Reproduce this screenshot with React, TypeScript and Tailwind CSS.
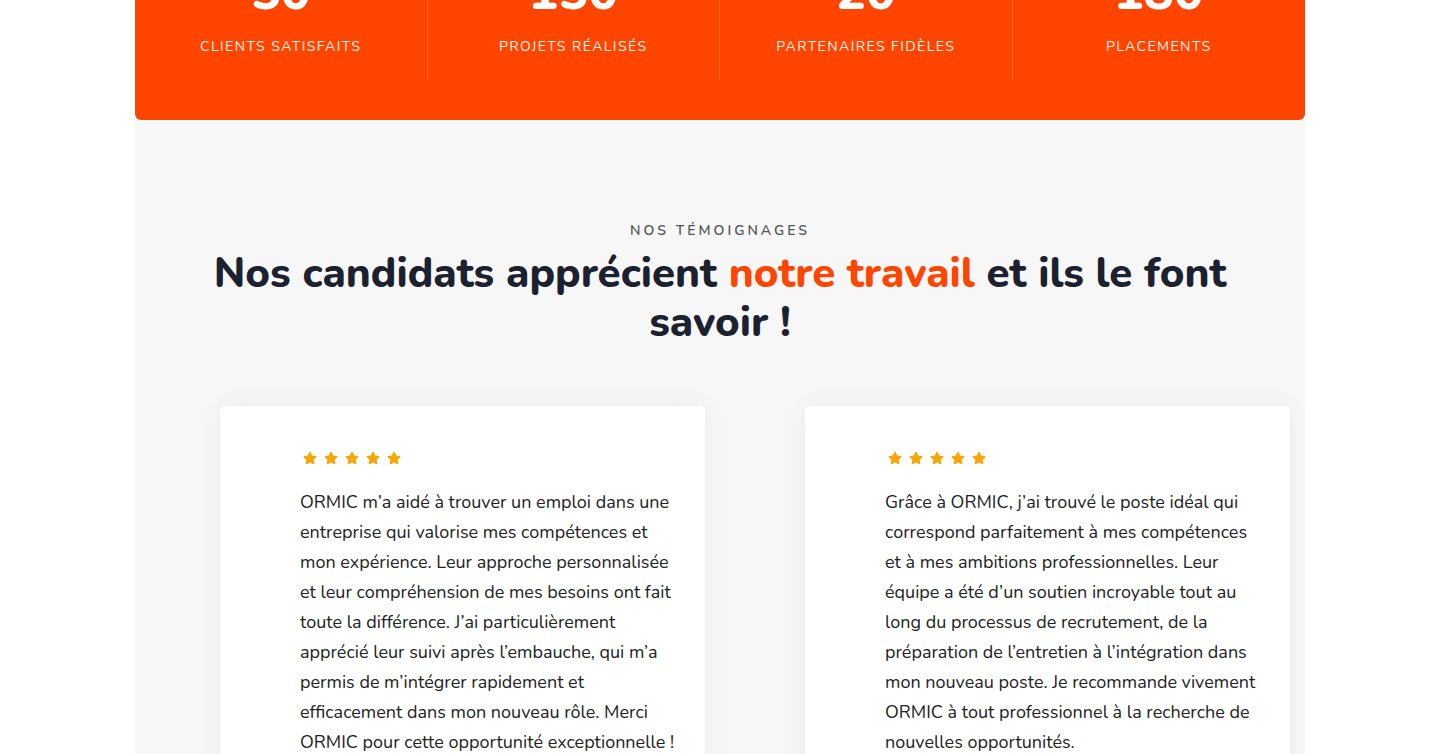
import { FaStar } from 'react-icons/fa';

const stats = [
  { value: '50', label: 'Clients satisfaits' },
  { value: '150', label: 'Projets réalisés' },
  { value: '20', label: 'Partenaires fidèles' },
  { value: '180', label: 'Placements' },
];

const testimonials = [
  [
    'ORMIC m’a aidé à trouver un emploi dans une',
    'entreprise qui valorise mes compétences et',
    'mon expérience. Leur approche personnalisée',
    'et leur compréhension de mes besoins ont fait',
    'toute la différence. J’ai particulièrement',
    'apprécié leur suivi après l’embauche, qui m’a',
    'permis de m’intégrer rapidement et',
    'efficacement dans mon nouveau rôle. Merci',
    'ORMIC pour cette opportunité exceptionnelle !',
  ],
  [
    'Grâce à ORMIC, j’ai trouvé le poste idéal qui',
    'correspond parfaitement à mes compétences',
    'et à mes ambitions professionnelles. Leur',
    'équipe a été d’un soutien incroyable tout au',
    'long du processus de recrutement, de la',
    'préparation de l’entretien à l’intégration dans',
    'mon nouveau poste. Je recommande vivement',
    'ORMIC à tout professionnel à la recherche de',
    'nouvelles opportunités.',
  ],
];

function TestimonialCard({ lines }: { lines: string[] }) {
  return (
    <div className="w-[485px] shrink-0 rounded bg-white pt-[45px] pb-10 pl-20 pr-5 shadow-[0_0_24px_rgba(0,0,0,0.05)]">
      <div className="ml-[3px] flex gap-[7px] text-[#f7a707]">
        {[0, 1, 2, 3, 4].map((i) => (
          <FaStar key={i} className="h-[14px] w-[14px]" />
        ))}
      </div>
      <p className="mt-[22px] text-[18px] leading-[30px] text-[#222222] whitespace-nowrap">
        {lines.map((line, idx) => (
          <span key={idx} className="block">
            {line}
          </span>
        ))}
      </p>
    </div>
  );
}

export default function App() {
  return (
    <div className="min-h-screen overflow-hidden bg-white font-['Nunito','Lato',sans-serif]">
      <div className="mx-auto w-[1170px]">
        {/* Stats band */}
        <div className="relative z-10 -mt-[80px] grid grid-cols-4 rounded-md bg-[#ff4500] pt-[48px] pb-10">
          {stats.map((s, idx) => (
            <div
              key={s.label}
              className={`flex flex-col items-center pb-[23px] ${idx < 3 ? 'border-r border-white/20' : ''}`}
            >
              <span className="text-[50px] font-extrabold leading-[50px] text-white">{s.value}</span>
              <span className="mt-[19px] text-[14px] uppercase leading-5 tracking-[1.45px] text-[#fff4ee]">
                {s.label}
              </span>
            </div>
          ))}
        </div>

        {/* Testimonials */}
        <section className="bg-[#f7f7f7] pt-[101px] pb-16">
          <p className="text-center text-[14px] font-semibold uppercase leading-5 tracking-[3px] text-[#555555]">
            Nos témoignages
          </p>
          <h2 className="mt-[8px] text-center text-[42px] font-extrabold leading-[49px] text-[#1c2130]">
            Nos candidats apprécient <span className="text-[#ff4500]">notre travail</span> et ils le font
            <br />
            savoir !
          </h2>
          <div className="mt-[59px] flex gap-[100px] pl-[85px]">
            {testimonials.map((lines, idx) => (
              <TestimonialCard key={idx} lines={lines} />
            ))}
          </div>
        </section>
      </div>
    </div>
  );
}
